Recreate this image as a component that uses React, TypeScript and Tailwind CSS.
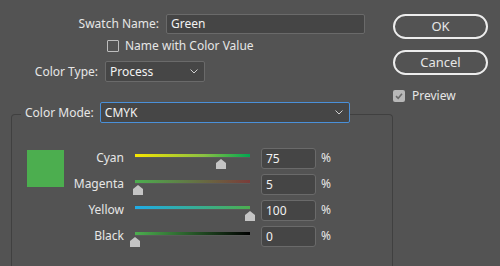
import React from "react";

const font = { fontFamily: '"Noto Sans", "Open Sans", sans-serif' };

function Chevron() {
  return (
    <svg width="8" height="5" viewBox="0 0 8 5" className="shrink-0">
      <path d="M0.5 0.5 L4 4 L7.5 0.5" fill="none" stroke="#cfcfcf" strokeWidth="1" />
    </svg>
  );
}

function Thumb({ pct }: { pct: number }) {
  return (
    <svg
      width="10"
      height="10"
      viewBox="0 0 10 10"
      className="absolute top-[5px]"
      style={{ left: `${pct * 115 - 5}px` }}
    >
      <polygon points="5,0 10,4 10,10 0,10 0,4" fill="#c4c4c4" />
    </svg>
  );
}

const sliders = [
  { label: "Cyan", value: "75", pct: 0.75, grad: "bg-[linear-gradient(to_right,#f7e600,#8ac043_60%,#00a651)]" },
  { label: "Magenta", value: "5", pct: 0.03, grad: "bg-[linear-gradient(to_right,#4cae4f,#7a3c3a)]" },
  { label: "Yellow", value: "100", pct: 1, grad: "bg-[linear-gradient(to_right,#20ace6,#4cae4f)]" },
  { label: "Black", value: "0", pct: 0, grad: "bg-[linear-gradient(to_right,#4cae4f,#000000)]" },
];

export default function App() {
  return (
    <div
      className="w-[500px] h-[266px] bg-[#535353] overflow-hidden flex text-[12px] text-[#e6e6e6] whitespace-nowrap"
      style={font}
    >
      {/* Left form */}
      <div className="w-[393px] flex flex-col pt-[14px]">
        <div className="flex items-center h-[20px]">
          <div className="w-[159px] text-right">Swatch Name:</div>
          <div className="ml-[7px] w-[199px] h-[20px] bg-[#454545] border border-[#6a6a6a] rounded-[2px] flex items-center pl-[4px] text-[#f2f2f2]">
            Green
          </div>
        </div>
        <div className="flex items-center mt-[6px] h-[12px] pl-[107px]">
          <div className="w-[12px] h-[12px] border border-[#bdbdbd] rounded-[1px]" />
          <span className="ml-[6px]">Name with Color Value</span>
        </div>
        <div className="flex items-center mt-[9px] h-[21px]">
          <div className="w-[98px] text-right">Color Type:</div>
          <div className="ml-[7px] w-[100px] h-[21px] bg-[#464646] border border-[#6a6a6a] rounded-[2px] flex items-center justify-between pl-[4px] pr-[6px] text-[#f2f2f2]">
            <span>Process</span>
            <Chevron />
          </div>
        </div>
        {/* Group box */}
        <div className="mt-[32px] ml-[11px] w-[382px] flex-1 border-t border-x border-[#404040] rounded-t-[4px]">
          <div className="-mt-[13px] ml-[9px] w-[328px] h-[21px] flex items-center bg-[#535353] pl-[4px]">
            <span className="shrink-0">Color Mode:</span>
            <div className="ml-[6px] w-[250px] shrink-0 h-[21px] bg-[#464646] border border-[#4a90d9] rounded-[2px] flex items-center justify-between pl-[4px] pr-[6px] text-[#f2f2f2]">
              <span>CMYK</span>
              <Chevron />
            </div>
          </div>
          <div className="flex mt-[25px] pl-[15px]">
            <div className="w-[37px] h-[37px] mt-[2px] bg-[#4cae4f] shrink-0" />
            <div className="flex flex-col gap-[6px]">
              {sliders.map((s) => (
                <div key={s.label} className="flex items-start h-[20px]">
                  <div className="w-[60px] h-[20px] flex items-center justify-end">{s.label}</div>
                  <div className="ml-[11px] w-[115px] mt-[6px] relative">
                    <div className={`h-[4px] w-full ${s.grad} border-b border-[#5a5a5a]`} />
                    <Thumb pct={s.pct} />
                  </div>
                  <div className="ml-[11px] w-[55px] h-[21px] bg-[#454545] border border-[#6a6a6a] rounded-[3px] flex items-center pl-[4px] text-[#f2f2f2]">
                    {s.value}
                  </div>
                  <div className="ml-[5px] h-[20px] flex items-center">%</div>
                </div>
              ))}
            </div>
          </div>
        </div>
      </div>
      {/* Right buttons */}
      <div className="flex flex-col pt-[14px] w-[95px]">
        <div className="h-[25px] rounded-full border-2 border-[#ededed] flex items-center justify-center text-[13px]">
          OK
        </div>
        <div className="mt-[11px] h-[25px] rounded-full border-2 border-[#ededed] flex items-center justify-center text-[13px]">
          Cancel
        </div>
        <div className="mt-[12px] flex items-center">
          <div className="w-[12px] h-[12px] rounded-[2px] bg-[#b8b8b8] flex items-center justify-center">
            <svg width="10" height="10" viewBox="0 0 10 10">
              <path d="M2 5.2 L4.2 7.3 L8 2.8" fill="none" stroke="#6a6a6a" strokeWidth="1.6" />
            </svg>
          </div>
          <span className="ml-[7px]">Preview</span>
        </div>
      </div>
    </div>
  );
}
